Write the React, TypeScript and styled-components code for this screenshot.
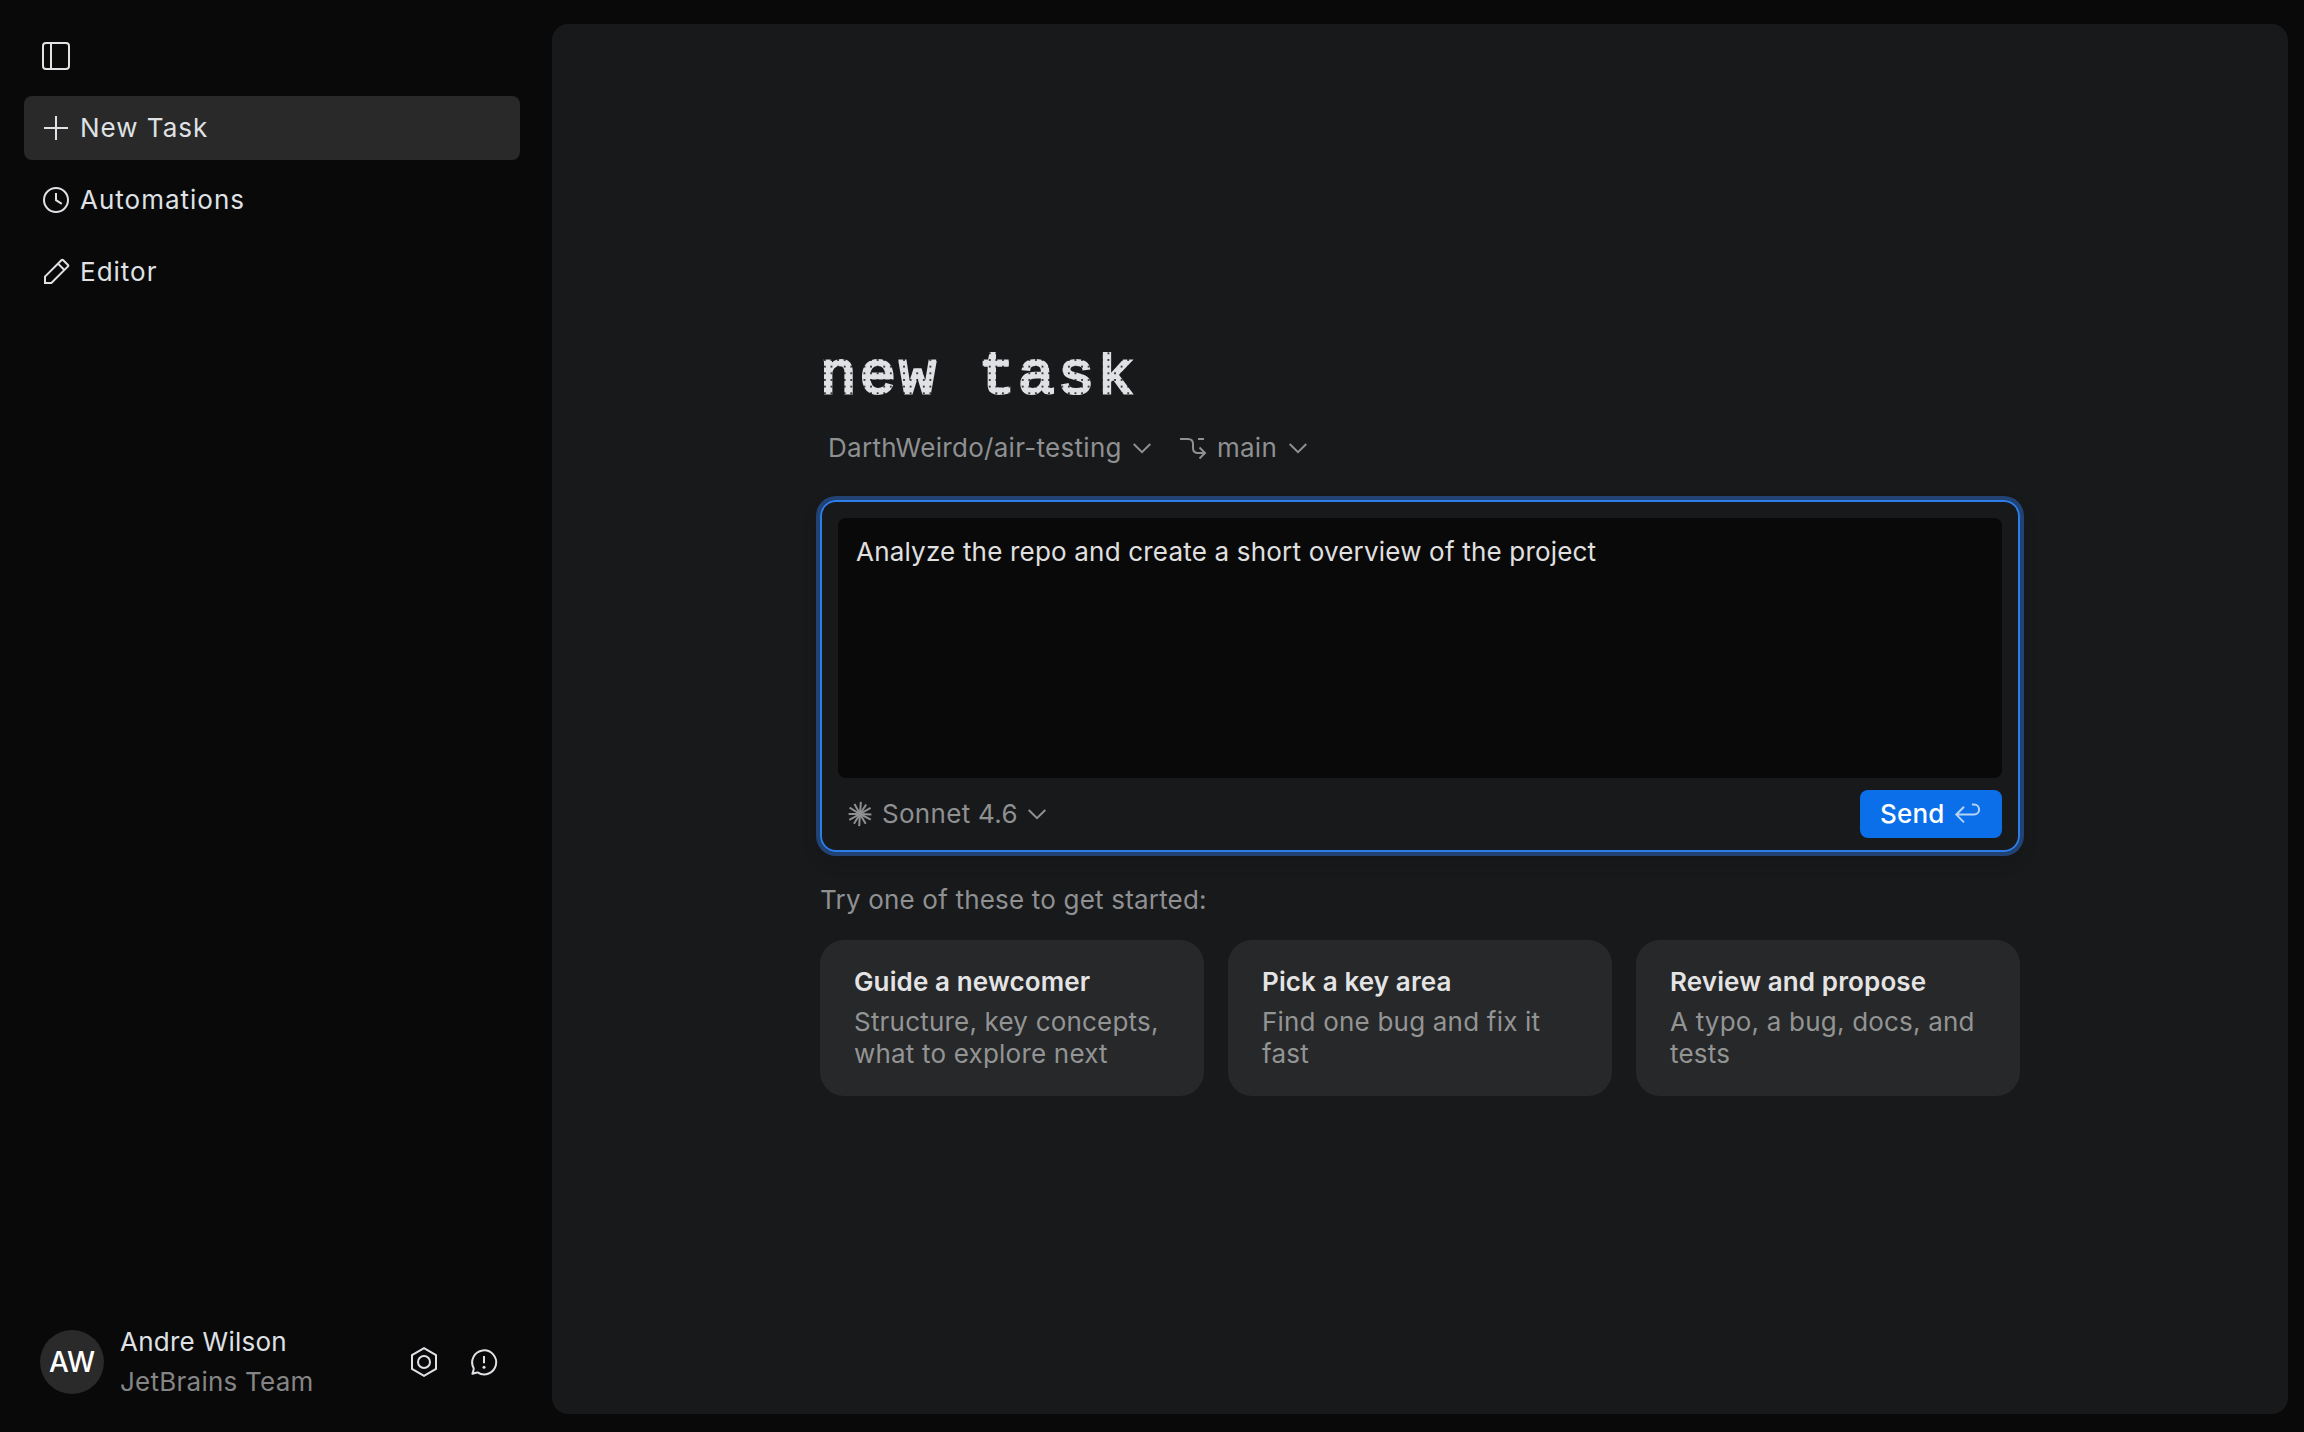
import React from 'react';
import styled, { createGlobalStyle } from 'styled-components';

const GlobalStyle = createGlobalStyle`
  *, *::before, *::after { box-sizing: border-box; }
  body { margin: 0; background: #090909; }
  h1, h2, p { margin: 0; }
  button, textarea { font: inherit; color: inherit; border: 0; padding: 0; background: none; }
`;

const Shell = styled.div`
  display: flex;
  height: 1432px;
  overflow: hidden;
  background: #090909;
  color: #dfe1e5;
  font: 400 26px/32px Inter, "Liberation Sans", sans-serif;
`;

const Sidebar = styled.aside`
  display: flex;
  flex-direction: column;
  width: 552px;
  padding: 24px 32px 18px 24px;
`;

const IconSvg = styled.svg`
  flex: none;
  display: block;
  width: 32px;
  height: 32px;
  fill: none;
  stroke: currentColor;
  stroke-width: 2;
`;

const ToggleButton = styled.button`
  display: flex;
  align-items: center;
  height: 64px;
  margin-bottom: 8px;
  padding: 0 16px;
`;

const Nav = styled.nav`
  display: flex;
  flex-direction: column;
  gap: 8px;
`;

const NavItem = styled.a<{ $active?: boolean }>`
  display: flex;
  align-items: center;
  gap: 8px;
  height: 64px;
  padding: 0 16px;
  border-radius: 8px;
  letter-spacing: 1px;
  background: ${p => (p.$active ? '#292929' : 'transparent')};
`;

const Account = styled.footer`
  display: flex;
  align-items: center;
  margin-top: auto;
  padding: 0 12px 16px 16px;
`;

const Avatar = styled.div`
  display: grid;
  place-items: center;
  width: 64px;
  height: 64px;
  border-radius: 50%;
  background: #2a2a2a;
  color: #fff;
  font-size: 28px;
  font-weight: 500;
`;

const Identity = styled.div`
  display: flex;
  flex-direction: column;
  flex: 1;
  gap: 8px;
  margin-left: 16px;
  letter-spacing: 0.25px;
`;

const Muted = styled.span`
  color: #858585;
`;

const AccountActions = styled.div`
  display: flex;
  gap: 28px;
  padding-right: 8px;
`;

const Panel = styled.main`
  display: flex;
  justify-content: center;
  width: 1736px;
  height: 1390px;
  margin-top: 24px;
  padding-top: 316px;
  border-radius: 16px;
  background: #18191b;
`;

const Content = styled.div`
  display: flex;
  flex-direction: column;
  width: 1200px;
`;

/* Text is filled with a dot grid whose pitch divides the character advance,
   so every stem lands on a column of dots. */
const DottedTitle = styled.h1`
  height: 74px;
  font: 400 61px/74px "Liberation Mono", monospace;
  letter-spacing: 3px;
  color: transparent;
  -webkit-text-stroke: 3px transparent;
  background: radial-gradient(circle, #dfe1e5 3.6px, transparent 4.1px) 4.9px 0 / 6.6px 6.67px;
  background-clip: text;
  -webkit-background-clip: text;
  clip-path: inset(12px 0 0);
`;

const ContextRow = styled.div`
  display: flex;
  align-items: center;
  gap: 18px;
  height: 32px;
  margin-top: 18px;
  padding-left: 8px;
  color: #8f9092;
`;

const Picker = styled.button<{ $gap?: number }>`
  display: flex;
  align-items: center;
  gap: ${p => p.$gap ?? 8}px;
  letter-spacing: 0.3px;
`;

const PickerLabel = styled.span<{ $trim?: number }>`
  margin-right: -${p => p.$trim ?? 4}px;
`;

const Composer = styled.section`
  display: flex;
  flex-direction: column;
  gap: 12px;
  height: 352px;
  margin-top: 36px;
  padding: 16px 16px 12px;
  border: 2px solid #2b7de9;
  border-radius: 16px;
  box-shadow: 0 0 0 4px #214273, 0 8px 18px 2px rgba(0, 0, 0, 0.13);
`;

const Prompt = styled.textarea`
  display: block;
  height: 260px;
  padding: 18px;
  border-radius: 8px;
  background: #090909;
  color: #e0e0e0;
  letter-spacing: 0.19px;
  resize: none;
  outline: none;
`;

const ComposerBar = styled.div`
  display: flex;
  align-items: center;
  justify-content: space-between;
  height: 48px;
  padding-left: 6px;
  color: #8f9092;
`;

const SendButton = styled.button`
  display: flex;
  align-items: center;
  justify-content: space-between;
  width: 142px;
  height: 48px;
  padding: 0 18px 0 20px;
  border-radius: 8px;
  background: #0a6fe8;
  color: #fff;
  font-weight: 500;
  letter-spacing: 0.2px;

  ${IconSvg} { opacity: 0.7; }
`;

const Hint = styled.p`
  margin-top: 32px;
  color: #8f9092;
  letter-spacing: 0.19px;
`;

const Cards = styled.div`
  display: grid;
  grid-template-columns: repeat(3, 1fr);
  gap: 24px;
  margin-top: 24px;
`;

const Card = styled.article`
  display: flex;
  flex-direction: column;
  gap: 8px;
  height: 156px;
  padding: 26px 34px;
  border-radius: 24px;
  background: #27282a;
`;

const CardTitle = styled.h2`
  font-size: 26px;
  line-height: 32px;
  font-weight: 600;
  letter-spacing: 0.12px;
  color: #e4e4e5;
`;

const CardText = styled.p`
  color: #939494;
  letter-spacing: 0.2px;
`;

const Icon = ({ children }: { children: React.ReactNode }) => (
  <IconSvg viewBox="0 0 32 32">{children}</IconSvg>
);

const Chevron = () => (
  <Icon>
    <path d="M7.7 12 16 20.2 24.3 12" />
  </Icon>
);

const Burst = () => (
  <Icon>
    {[4, 33, 60, 92, 118, 150, 184, 212, 241, 270, 301, 331].map((angle, i) => (
      <path key={angle} d={`M16 16V${i % 2 ? 4.6 : 3.8}`} transform={`rotate(${angle} 16 16)`} />
    ))}
  </Icon>
);

const suggestions = [
  { title: 'Guide a newcomer', text: 'Structure, key concepts, what to explore next' },
  { title: 'Pick a key area', text: 'Find one bug and fix it fast' },
  { title: 'Review and propose', text: 'A typo, a bug, docs, and tests' },
];

export default function App() {
  return (
    <>
      <GlobalStyle />
      <Shell>
        <Sidebar>
          <ToggleButton aria-label="Toggle sidebar">
            <Icon>
              <rect x="3" y="3" width="26" height="26" rx="3" />
              <path d="M11 3v26" />
            </Icon>
          </ToggleButton>
          <Nav>
            <NavItem $active>
              <Icon>
                <path d="M16 4v24M4 16h24" />
              </Icon>
              New Task
            </NavItem>
            <NavItem>
              <Icon>
                <circle cx="16" cy="16" r="12" />
                <path d="M16 9v7.2l5.8 3.6" />
              </Icon>
              Automations
            </NavItem>
            <NavItem>
              <Icon>
                <path d="M5 27v-6.4L21.6 4q.7-.7 1.4 0l5 5q.7.7 0 1.4L11.4 27ZM18 7.6l6.4 6.4" />
              </Icon>
              Editor
            </NavItem>
          </Nav>
          <Account>
            <Avatar>AW</Avatar>
            <Identity>
              <span>Andre Wilson</span>
              <Muted>JetBrains Team</Muted>
            </Identity>
            <AccountActions>
              <Icon>
                <path d="M16 2.2 28 9.1v13.8L16 29.8 4 22.9V9.1Z" />
                <circle cx="16" cy="16" r="6" />
              </Icon>
              <Icon>
                <path
                  strokeLinejoin="round"
                  d="M9.6 26.4A12 12 0 1 0 5.6 22c.6 1.6-.4 3-1.2 5.7 2 0 3.4-1.5 5.2-1.3ZM16 10v7.2"
                />
                <circle cx="16" cy="21.3" r="1.5" fill="currentColor" stroke="none" />
              </Icon>
            </AccountActions>
          </Account>
        </Sidebar>
        <Panel>
          <Content>
            <DottedTitle>new task</DottedTitle>
            <ContextRow>
              <Picker>
                <PickerLabel>DarthWeirdo/air-testing</PickerLabel>
                <Chevron />
              </Picker>
              <Picker $gap={9}>
                <Icon>
                  <path d="M4 7h8q5 0 5 5v4q0 5 5 5h6.5M22 7h6M23.5 15.5 29 21l-5.5 5.5" />
                </Icon>
                <PickerLabel>main</PickerLabel>
                <Chevron />
              </Picker>
            </ContextRow>
            <Composer>
              <Prompt readOnly value="Analyze the repo and create a short overview of the project" />
              <ComposerBar>
                <Picker $gap={6}>
                  <Burst />
                  <PickerLabel $trim={2.5}>Sonnet 4.6</PickerLabel>
                  <Chevron />
                </Picker>
                <SendButton>
                  Send
                  <Icon>
                    <path d="M12 8.7 4.3 16.6 12 24.4M4.5 16.6H22a5.1 5.1 0 0 0 0-10.2H20" />
                  </Icon>
                </SendButton>
              </ComposerBar>
            </Composer>
            <Hint>Try one of these to get started:</Hint>
            <Cards>
              {suggestions.map(s => (
                <Card key={s.title}>
                  <CardTitle>{s.title}</CardTitle>
                  <CardText>{s.text}</CardText>
                </Card>
              ))}
            </Cards>
          </Content>
        </Panel>
      </Shell>
    </>
  );
}
